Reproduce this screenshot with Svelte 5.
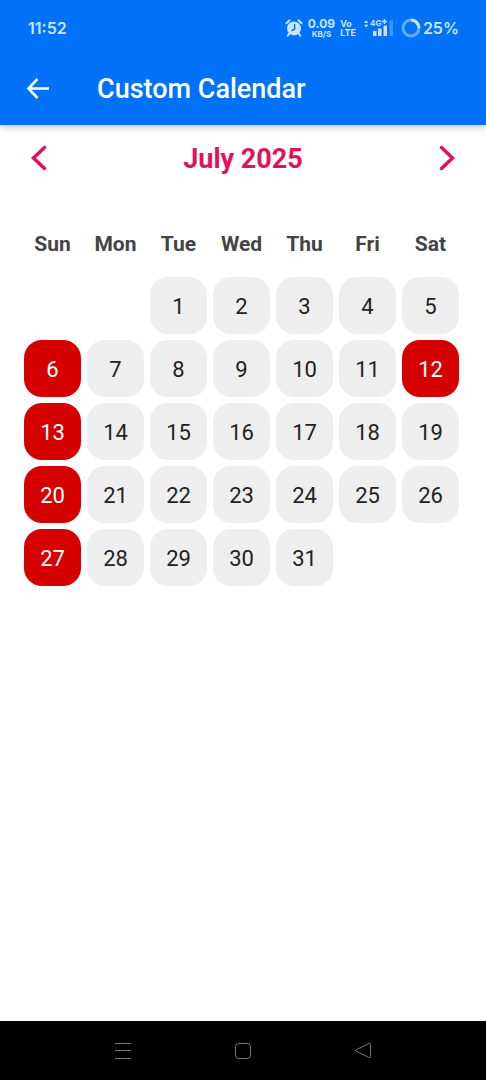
<script>
  const weekdays = ['Sun', 'Mon', 'Tue', 'Wed', 'Thu', 'Fri', 'Sat'];
  const monthNames = [
    'January', 'February', 'March', 'April', 'May', 'June',
    'July', 'August', 'September', 'October', 'November', 'December'
  ];
  const holidays = ['2025-7-12'];

  let year = 2025;
  let month = 6;

  $: offset = new Date(year, month, 1).getDay();
  $: total = new Date(year, month + 1, 0).getDate();
  $: weeks = buildWeeks(offset, total);

  function buildWeeks(offset, total) {
    const cells = Array(offset).fill(null);
    for (let d = 1; d <= total; d++) cells.push(d);
    while (cells.length % 7) cells.push(null);

    const rows = [];
    for (let i = 0; i < cells.length; i += 7) rows.push(cells.slice(i, i + 7));
    return rows;
  }

  function isHoliday(day, column, y, m) {
    return column === 0 || holidays.includes(`${y}-${m + 1}-${day}`);
  }

  function changeMonth(step) {
    const next = new Date(year, month + step, 1);
    year = next.getFullYear();
    month = next.getMonth();
  }
</script>

<div class="screen">
  <header>
    <div class="status-bar">
      <span class="time">11:52</span>
      <div class="status-icons">
        <svg width="18" height="18" viewBox="0 0 18 18" aria-hidden="true">
          <path d="M1.4 4.2 4.4 1.4M16.6 4.2 13.6 1.4M4.4 14.4 2.8 16.6M13.6 14.4l1.6 2.2" fill="none" stroke="currentColor" stroke-width="2" stroke-linecap="round" />
          <circle cx="9" cy="9.4" r="7" fill="currentColor" />
          <path d="M9.6 5.8v4.4L7 11.4" fill="none" stroke="#0072f9" stroke-width="1.5" stroke-linecap="round" />
        </svg>
        <div class="stack speed"><b>0.09</b><small>KB/S</small></div>
        <div class="stack volte"><b>Vo</b><b>LTE</b></div>
        <svg class="signal" width="30" height="20" viewBox="0 0 30 20" aria-hidden="true">
          <path d="M0 5 2.2 2.2 4.4 5zM0 6.8h4.4L2.2 9.6z" fill="currentColor" />
          <text x="6" y="8" font-size="8" font-weight="700" fill="currentColor">4G</text>
          <path d="M18 3.5h5M20.5 1v5" stroke="currentColor" stroke-width="1.4" />
          <path d="M9 13h3.5v5H9zM14 10.5h3.5V18H14zM19.5 7.5H23V18h-3.5z" fill="currentColor" />
          <path d="M25.5 2H29v16h-3.5z" fill="currentColor" opacity="0.3" />
        </svg>
        <svg class="battery" width="20" height="20" viewBox="0 0 20 20" aria-hidden="true">
          <circle cx="10" cy="10" r="8" fill="none" stroke="currentColor" stroke-width="3" opacity="0.5" />
          <path d="M10 2a8 8 0 0 1 8 8" fill="none" stroke="currentColor" stroke-width="3" />
        </svg>
        <span class="percent">25%</span>
      </div>
    </div>
    <div class="app-bar">
      <button aria-label="Back">
        <svg width="24" height="24" viewBox="0 0 24 24">
          <path d="M12.5 2 3.5 11.5l9 9.500M3.500 11.500H24" fill="none" stroke="currentColor" stroke-width="2.6" />
        </svg>
      </button>
      <h1>Custom Calendar</h1>
    </div>
  </header>

  <main>
    <div class="month-bar">
      <button aria-label="Previous month" on:click={() => changeMonth(-1)}>
        <svg width="30" height="30" viewBox="0 0 30 30">
          <path d="M20.5 3.5 9.5 14l11 10.5" />
        </svg>
      </button>
      <h2>{monthNames[month]} {year}</h2>
      <button aria-label="Next month" on:click={() => changeMonth(1)}>
        <svg width="30" height="30" viewBox="0 0 30 30">
          <path d="M9.5 3.5 20.5 14l-11 10.5" />
        </svg>
      </button>
    </div>

    <table>
      <thead>
        <tr>
          {#each weekdays as name}
            <th scope="col">{name}</th>
          {/each}
        </tr>
      </thead>
      <tbody>
        {#each weeks as week}
          <tr>
            {#each week as day, column}
              <td>
                {#if day}
                  <button class="day" class:holiday={isHoliday(day, column, year, month)}>{day}</button>
                {/if}
              </td>
            {/each}
          </tr>
        {/each}
      </tbody>
    </table>
  </main>

  <nav>
    <button aria-label="Recent apps">
      <svg width="20" height="20" viewBox="0 0 20 20">
        <path d="M2 2.5h16M2 9.5h16M2 17.5h16" />
      </svg>
    </button>
    <button aria-label="Home">
      <svg width="20" height="20" viewBox="0 0 20 20">
        <rect x="2.5" y="2.5" width="15" height="15" rx="3.5" />
      </svg>
    </button>
    <button aria-label="Go back">
      <svg width="20" height="20" viewBox="0 0 20 20">
        <path d="M16.2 2.4 2.9 8.9q-1 .6 0 1.2l13.3 6.500q1.300.5 1.300-.8V3.200q0-1.300-1.300-.8z" />
      </svg>
    </button>
  </nav>
</div>

<style>
  :global(body) {
    margin: 0;
  }

  .screen {
    display: flex;
    flex-direction: column;
    min-height: 100vh;
    background: #fff;
    font-family: Roboto, sans-serif;
  }

  button {
    display: flex;
    align-items: center;
    justify-content: center;
    padding: 0;
    border: 0;
    background: none;
    color: inherit;
    font: inherit;
    cursor: pointer;
  }

  header {
    background: #0072f9;
    color: #fff;
    box-shadow: 0 1px 8px rgba(0, 0, 0, 0.3);
  }

  .status-bar {
    display: flex;
    align-items: center;
    justify-content: space-between;
    height: 56px;
    padding: 0 27px 0 28px;
    color: #c9e4ff;
    font-family: Inter, sans-serif;
  }

  .time {
    font-size: 16px;
    font-weight: 600;
  }

  .status-icons {
    display: flex;
    align-items: center;
  }

  .stack {
    display: flex;
    flex-direction: column;
    align-items: center;
    margin-left: 5px;
  }

  .stack b,
  .stack small {
    font-weight: 700;
  }

  .speed b {
    font-size: 12px;
    line-height: 12px;
  }

  .speed small {
    font-size: 8px;
    line-height: 8px;
  }

  .volte {
    align-items: flex-start;
    font-size: 9px;
    line-height: 9px;
  }

  .signal {
    margin-left: 8px;
  }

  .battery {
    margin-left: 7px;
  }

  .percent {
    margin-left: 2px;
    font-size: 16px;
    font-weight: 600;
  }

  .app-bar {
    display: flex;
    align-items: center;
    height: 69px;
    padding: 0 25px 4px;
    box-sizing: border-box;
  }

  h1 {
    margin: 0 0 0 48px;
    font-size: 27px;
    font-weight: 500;
    line-height: 32px;
  }

  main {
    flex: 1;
    padding: 18px 24px 24px 21px;
  }

  .month-bar {
    display: flex;
    align-items: center;
    justify-content: space-between;
    margin-bottom: 54px;
    padding-left: 3px;
    color: #e30f60;
  }

  .month-bar path {
    fill: none;
    stroke: currentColor;
    stroke-width: 3.5;
    stroke-linecap: round;
  }

  h2 {
    margin: 0;
    font-size: 27px;
    font-weight: 700;
    line-height: 32px;
  }

  table {
    width: 100%;
    table-layout: fixed;
    border-collapse: collapse;
  }

  th {
    padding: 0 0 15px;
    color: #444;
    font-size: 21px;
    font-weight: 700;
    line-height: 30px;
  }

  td {
    padding: 3px;
  }

  .day {
    width: 100%;
    aspect-ratio: 1;
    box-sizing: border-box;
    padding-top: 2px;
    border-radius: 18px;
    background: #eee;
    color: #222;
    font-size: 22px;
  }

  .holiday {
    background: #d50000;
    color: #fff;
  }

  nav {
    display: flex;
    justify-content: center;
    gap: 100px;
    height: 59px;
    background: #000;
    color: #777;
  }

  nav svg {
    fill: none;
    stroke: currentColor;
    stroke-width: 1;
  }
</style>
